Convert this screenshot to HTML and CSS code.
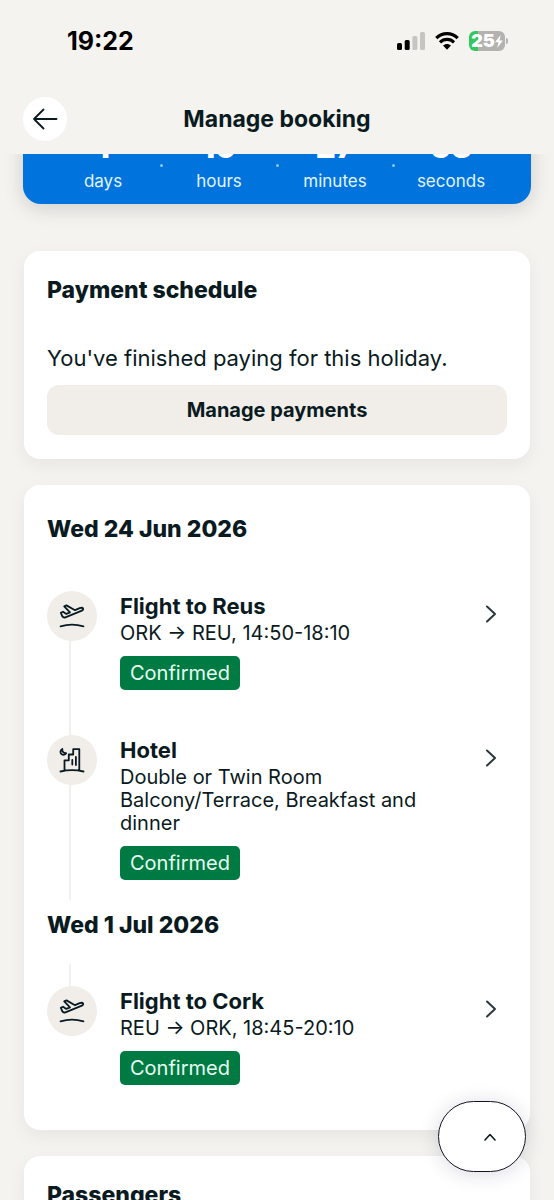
FILE: index.html
```html
<!DOCTYPE html>
<html lang="en">
<head>
<meta charset="utf-8">
<meta name="viewport" content="width=device-width, initial-scale=1">
<title>Manage booking</title>
<link rel="stylesheet" href="styles.css">
</head>
<body>
<svg class="sprite" aria-hidden="true">
  <symbol id="plane" viewBox="0 0 26 26" fill="none" stroke="currentColor" stroke-width="1.8" stroke-linecap="round" stroke-linejoin="round">
    <path d="M1.800 9.700 4 8.700 7.300 10.900 11 9.400 5.200 3.400 7.500 2.400 16 7.200 20.700 5.200C22.200 4.600 23.700 4.700 24.100 5.600 24.500 6.600 23.600 7.400 22.300 7.900L6.400 14.300C5 14.800 4 14.500 3.300 13.300Z"/>
    <path d="M1.500 23.300C8.500 21.200 17.500 21.200 24.500 23.300"/>
  </symbol>
  <symbol id="hotel" viewBox="0 0 26 26" fill="none" stroke="currentColor" stroke-width="1.8" stroke-linecap="round" stroke-linejoin="round">
    <path d="M1.500 24.500C8.500 22.900 17.500 22.900 24.500 24.500M5.500 23V13.300H9.800V7.500H14.200V2.200H20.300V23M13.300 17.500V13M16.900 18V9.800"/>
    <path d="M3.300 1.900C1 3.300.9 6 2.700 7.200 4.300 8.300 6.500 7.800 7.200 6.200 4.700 6.500 2.900 4.700 3.300 1.900Z"/>
  </symbol>
  <symbol id="chevron" viewBox="0 0 12 20" fill="none" stroke="currentColor" stroke-width="2" stroke-linecap="round" stroke-linejoin="round">
    <path d="M2 2.500 10 10 2 17.500"/>
  </symbol>
</svg>
<div class="app">
  <div class="status">
    <span class="time">19:22</span>
    <div class="indicators">
      <svg width="28" height="18" viewBox="0 0 28 18" aria-label="Signal"><rect x="0" y="11" width="5" height="7" rx="1.500"/><rect x="7.700" y="8" width="5" height="10" rx="1.500"/><g fill="#c6c5c2"><rect x="15.400" y="4" width="5" height="14" rx="1.500"/><rect x="23" y="0" width="5" height="18" rx="1.500"/></g></svg>
      <svg width="24" height="18" viewBox="0 0 24 18" aria-label="Wi-Fi"><g fill="none" stroke="#000" stroke-width="3.200"><path d="M1.300 6.200C7.300.1 16.700.1 22.700 6.200"/><path d="M5 10.300C9 6.400 15 6.400 19 10.300"/></g><path d="M8 13.600C10.400 11.400 13.600 11.400 16 13.600L12 17.800Z"/></svg>
      <div class="battery"><span>25</span><svg width="8" height="13" viewBox="0 0 8 13" aria-hidden="true"><path fill="#fff" d="M5.600 0 0 7.300H3.500L2.200 13 8 5.400H4.600Z"/></svg></div>
    </div>
  </div>
  <header class="bar">
    <button class="back" aria-label="Back"><svg width="26" height="22" viewBox="0 0 26 22" fill="none" stroke="currentColor" stroke-width="1.800" stroke-linecap="round" stroke-linejoin="round"><path d="M24.500 11H2M11.500 1.500 2 11 11.500 20.500"/></svg></button>
    <h1>Manage booking</h1>
  </header>
  <main class="content">
    <section class="countdown" aria-label="Countdown">
      <div class="unit"><strong>1</strong><span>days</span></div>
      <div class="unit"><strong>19</strong><span>hours</span></div>
      <div class="unit"><strong>27</strong><span>minutes</span></div>
      <div class="unit"><strong>53</strong><span>seconds</span></div>
    </section>
    <section class="card payment">
      <h2>Payment schedule</h2>
      <p>You've finished paying for this holiday.</p>
      <button class="manage">Manage payments</button>
    </section>
    <section class="card itinerary">
      <h2>Wed 24 Jun 2026</h2>
      <ul class="outbound">
        <li><a class="stop" href="#reus">
          <span class="badge"><svg width="26" height="26"><use href="#plane"/></svg></span>
          <span class="info"><strong>Flight to Reus</strong><span class="detail">ORK → REU, 14:50-18:10</span><span class="tag">Confirmed</span></span>
          <svg class="go" width="12" height="20"><use href="#chevron"/></svg>
        </a></li>
        <li><a class="stop" href="#hotel-stay">
          <span class="badge"><svg width="26" height="26"><use href="#hotel"/></svg></span>
          <span class="info"><strong>Hotel</strong><span class="detail">Double or Twin Room Balcony/Terrace, Breakfast and dinner</span><span class="tag">Confirmed</span></span>
          <svg class="go" width="12" height="20"><use href="#chevron"/></svg>
        </a></li>
      </ul>
      <h2>Wed 1 Jul 2026</h2>
      <ul class="inbound">
        <li><a class="stop" href="#cork">
          <span class="badge"><svg width="26" height="26"><use href="#plane"/></svg></span>
          <span class="info"><strong>Flight to Cork</strong><span class="detail">REU → ORK, 18:45-20:10</span><span class="tag">Confirmed</span></span>
          <svg class="go" width="12" height="20"><use href="#chevron"/></svg>
        </a></li>
      </ul>
    </section>
    <section class="card passengers">
      <h2>Passengers</h2>
    </section>
  </main>
  <button class="top" aria-label="Back to top"><svg width="12" height="8" viewBox="0 0 12 8" fill="none" stroke="currentColor" stroke-width="1.600" stroke-linecap="round" stroke-linejoin="round"><path d="M1 7 6 1.500 11 7"/></svg></button>
</div>
</body>
</html>
```

FILE: styles.css
```css
* { box-sizing: border-box; }
body {
  margin: 0;
  background: #f4f3ef;
  color: #0a1a21;
  font-family: Inter, "Liberation Sans", sans-serif;
}
h1, h2, p, ul { margin: 0; padding: 0; }
button { font: inherit; color: inherit; border: 0; padding: 0; cursor: pointer; }
.sprite { position: absolute; width: 0; height: 0; }
.app { height: 100vh; display: flex; flex-direction: column; overflow: hidden; }

.status {
  flex: none;
  height: 82px;
  padding: 0 46px 0 67px;
  display: flex;
  align-items: center;
  justify-content: space-between;
  color: #000;
}
.time { font-size: 25px; font-weight: 700; }
.indicators { display: flex; align-items: center; gap: 10px; }
.battery {
  position: relative;
  width: 36px;
  height: 20px;
  margin-right: 3px;
  border-radius: 6px;
  background: linear-gradient(90deg, #34c759 9px, #b3b2af 9px);
  color: #fff;
  font-size: 18px;
  font-weight: 900;
  line-height: 20px;
  display: flex;
  align-items: center;
  justify-content: center;
}
.battery::after {
  content: "";
  position: absolute;
  left: 100%;
  margin-left: 1px;
  width: 2px;
  height: 6px;
  border-radius: 0 2px 2px 0;
  background: #b3b2af;
}

.bar {
  flex: none;
  height: 72px;
  padding: 2px 23px 0;
  display: grid;
  grid-template-columns: 44px 1fr 44px;
  align-items: center;
}
.back {
  width: 44px;
  height: 44px;
  border-radius: 50%;
  background: #fff;
  display: grid;
  place-items: center;
}
.bar h1 { font-size: 23px; font-weight: 700; line-height: 28px; text-align: center; }

.content { flex: 1; min-height: 0; overflow: hidden; padding: 0 24px; }
.countdown {
  margin: -72px -1px 47px;
  padding: 45px 22px 12px;
  display: grid;
  grid-template-columns: repeat(4, 1fr);
  border-radius: 18px;
  background: #0073dd;
  color: #fff;
  text-align: center;
  box-shadow: 0 4px 20px rgba(20, 20, 30, .16);
}
.unit { position: relative; }
.unit strong { display: block; margin-bottom: 3px; font-size: 32px; font-weight: 800; line-height: 40px; }
.unit span { display: block; font-size: 17px; line-height: 22px; color: #e3f4ff; }
.unit + .unit::before {
  content: "";
  position: absolute;
  left: -1px;
  top: 37px;
  width: 3px;
  height: 3px;
  border-radius: 50%;
  background: #8cc4f5;
}

.card {
  margin-bottom: 26px;
  padding: 24px 23px;
  border-radius: 16px;
  background: #fff;
  box-shadow: 0 6px 18px rgba(20, 20, 30, .06);
}
.card h2 { font-size: 23px; font-weight: 800; line-height: 30px; }
.payment p { margin: 38px 0 12px; font-size: 22px; line-height: 30px; }
.manage {
  width: 100%;
  height: 50px;
  border-radius: 12px;
  background: #f1eeea;
  font-size: 20px;
  font-weight: 700;
}
.itinerary { padding-top: 29px; padding-bottom: 0; }
.itinerary ul { list-style: none; }
.outbound { padding-top: 47px; padding-bottom: 10px; }
.inbound { padding-top: 24px; }
.stop {
  position: relative;
  display: grid;
  grid-template-columns: 50px 1fr 12px;
  column-gap: 23px;
  padding: 0 10px 45px 0;
  color: inherit;
  text-decoration: none;
}
.stop::before {
  content: "";
  position: absolute;
  left: 22px;
  top: 0;
  bottom: 0;
  width: 2px;
  background: #f3f1ed;
}
.outbound li:last-child .stop { padding-bottom: 20px; }
.inbound .stop { padding-top: 22px; }
.inbound .stop::before { bottom: auto; height: 22px; }
.badge {
  position: relative;
  width: 50px;
  height: 50px;
  border-radius: 50%;
  background: #f1eeea;
  display: grid;
  place-items: center;
}
.info { display: flex; flex-direction: column; align-items: flex-start; max-width: 300px; }
.info strong { font-size: 22px; line-height: 30px; }
.detail { font-size: 20px; line-height: 23px; margin: 1px 0 11px; }
.tag {
  padding: 0 10px;
  border-radius: 5px;
  background: #007a43;
  color: #e6fff2;
  font-size: 20px;
  line-height: 34px;
}
.go { margin-top: 13px; color: #2b383e; }
.passengers { padding-bottom: 48px; }

.top {
  position: fixed;
  right: 28px;
  bottom: 28px;
  width: 88px;
  height: 71px;
  padding-left: 16px;
  border: 1px solid #14141f;
  border-radius: 36px;
  background: #fff;
  box-shadow: 0 2px 20px rgba(30, 30, 80, .16);
  display: grid;
  place-items: center;
}
```
